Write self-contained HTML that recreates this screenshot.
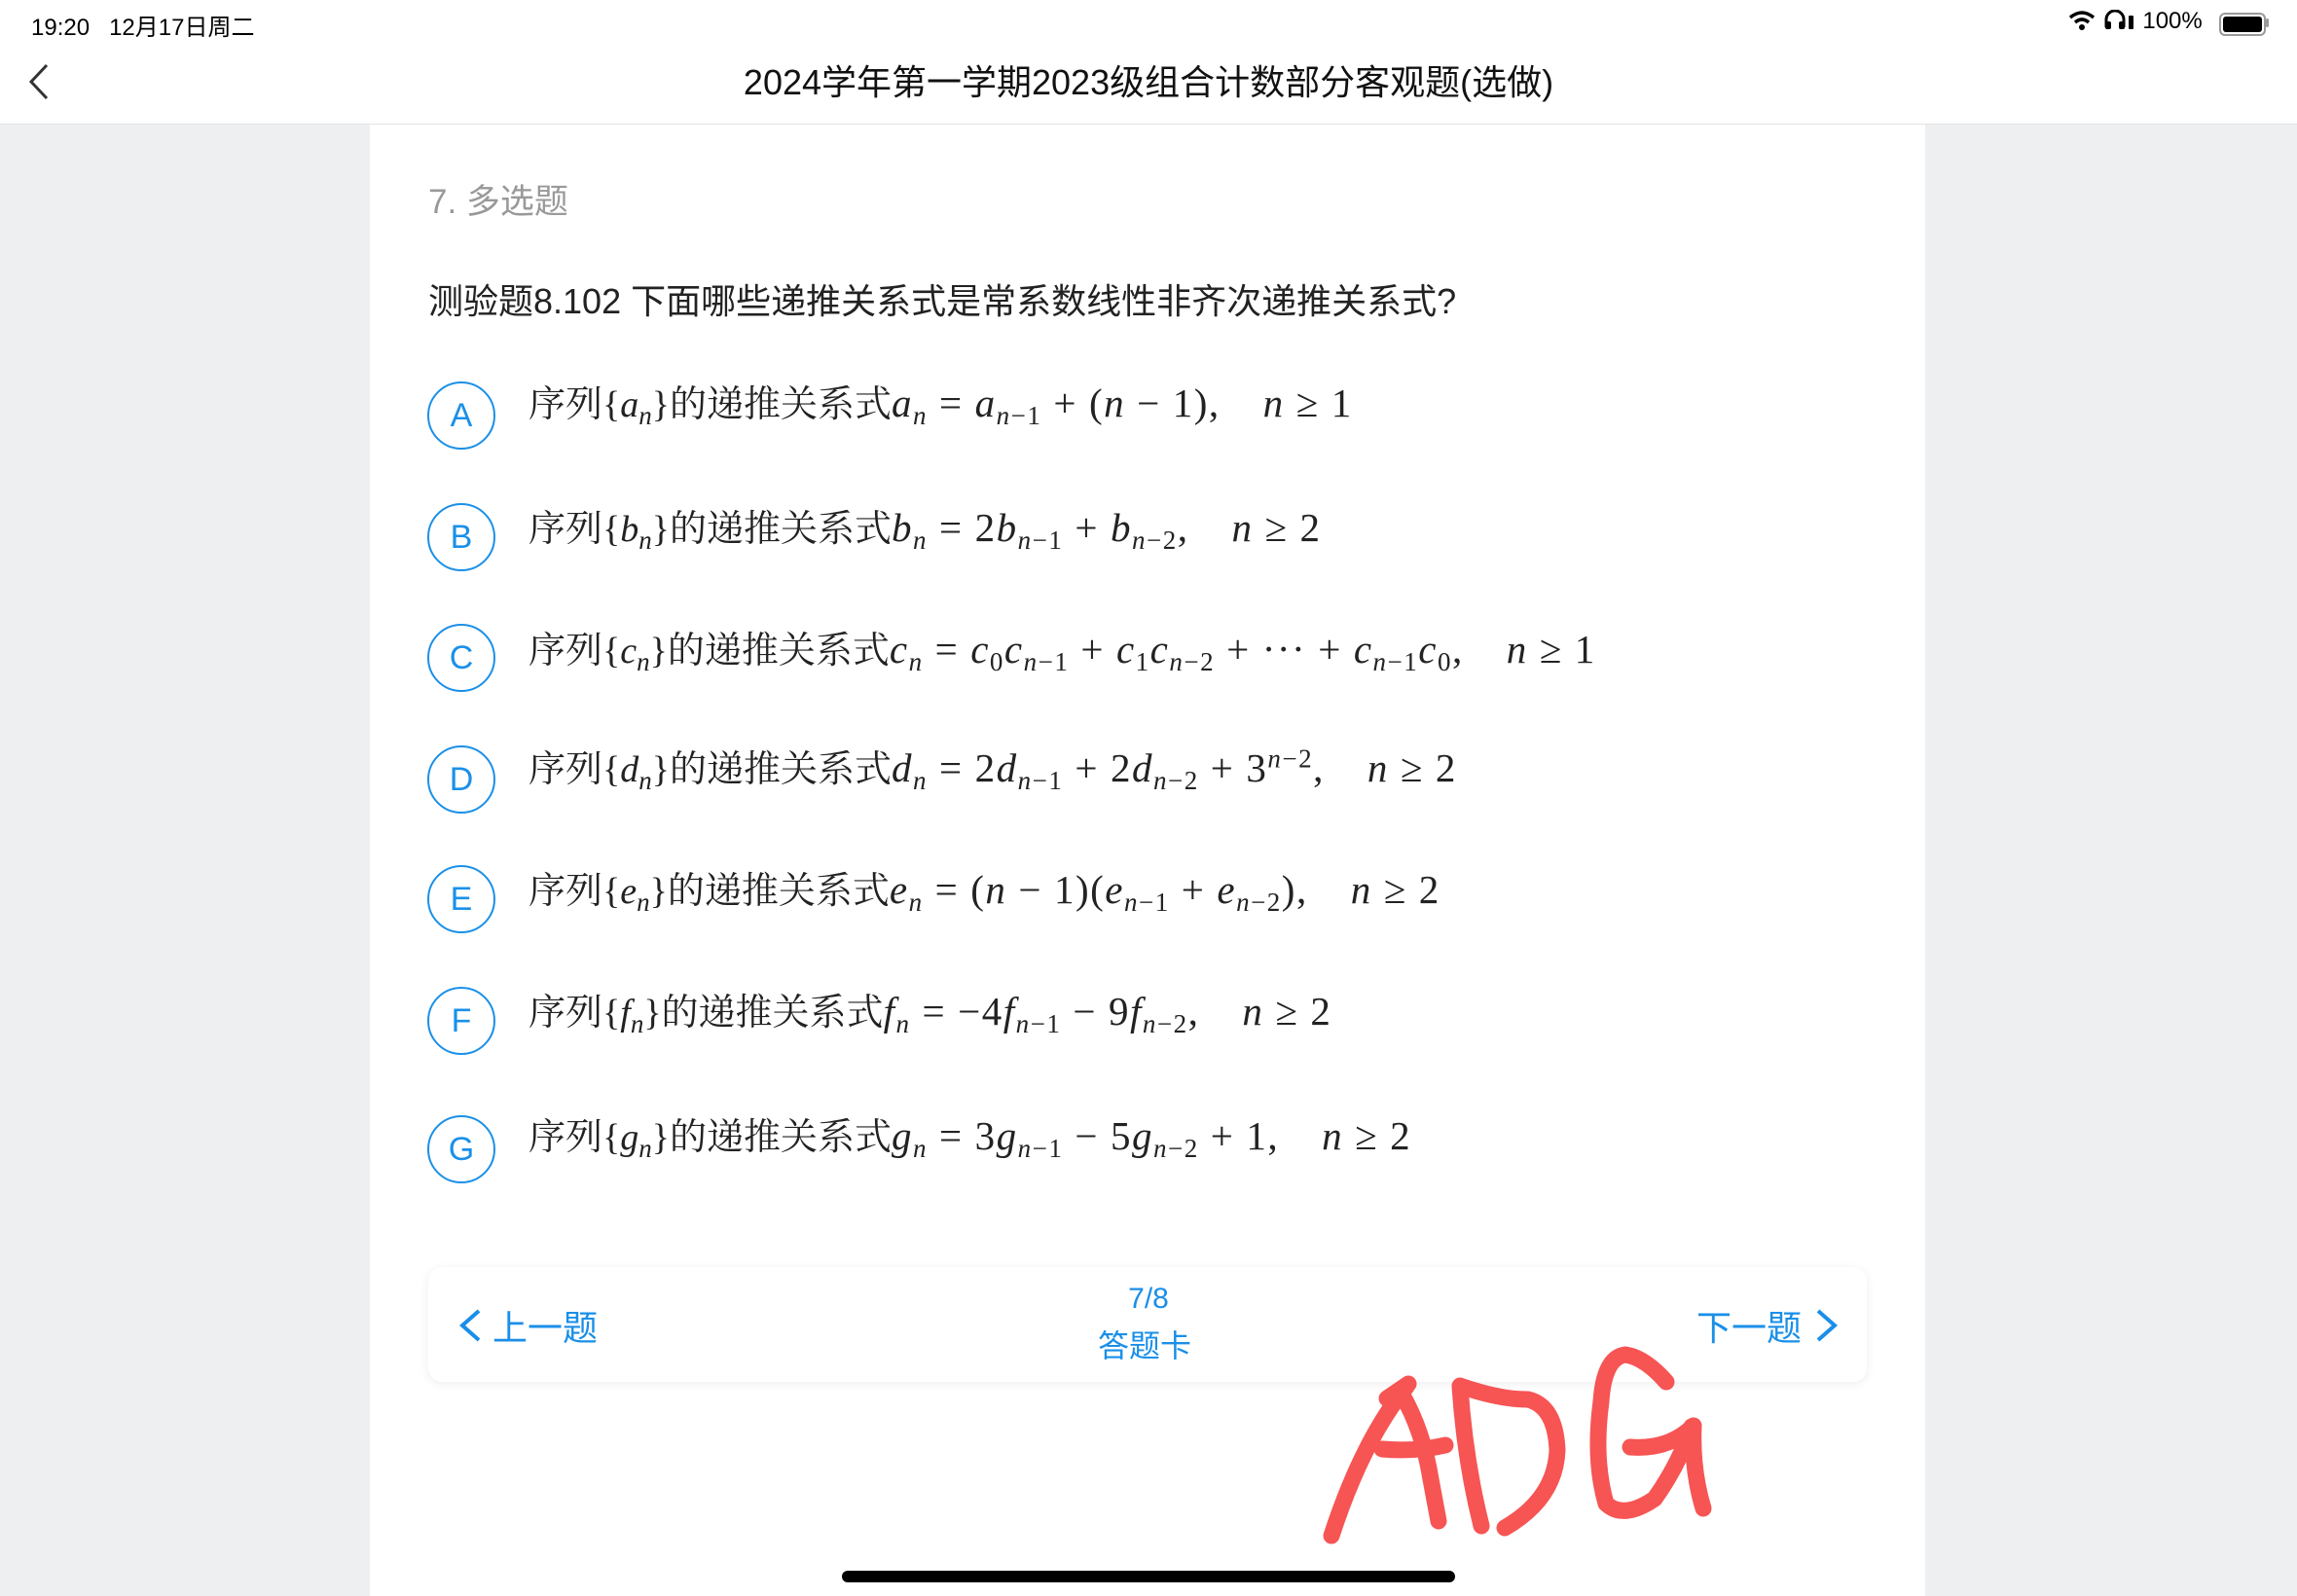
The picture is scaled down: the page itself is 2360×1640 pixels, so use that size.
<!DOCTYPE html>
<html><head><meta charset="utf-8"><style>
body{margin:0;width:2360px;height:1640px;position:relative;overflow:hidden;background:#eeeff1;font-family:"Liberation Sans","Noto Sans CJK SC",sans-serif;}
.hdr{position:absolute;left:0;top:0;width:2360px;height:127px;background:#fff;border-bottom:1px solid #e4e4e4;}
.st{position:absolute;top:8px;font-size:24px;color:#000;}
.title{position:absolute;top:56px;left:0;width:2360px;text-align:center;font-size:36px;color:#111;}
.panel{position:absolute;left:380px;top:128px;width:1598px;height:1512px;background:#fff;}
.abs{position:absolute;}
.circ{position:absolute;width:66px;height:66px;border:2.5px solid #1a90e8;border-radius:50%;color:#1a90e8;font-size:34px;text-align:center;line-height:66px;}
.opt{position:absolute;left:543px;font-family:"Liberation Serif","Noto Serif CJK SC",serif;font-size:38px;color:#222;white-space:nowrap;}
.opt i{font-style:italic}
.opt sub{font-size:27px;vertical-align:-8px}
.opt sub i{font-style:italic}
.m{font-size:41px;letter-spacing:1.5px}
.o{margin:0 12px}
.c{margin-right:44px}
</style></head><body>
<div class="hdr">
<div class="st" style="left:32px">19:20&nbsp;&nbsp;&nbsp;12月17日周二</div>
<div class="st" style="left:2124px;font-size:24px">
<svg width="30" height="22" viewBox="0 0 30 22" style="vertical-align:-3px"><path d="M3 8 Q15 -2 27 8" stroke="#000" stroke-width="3.5" fill="none"/><path d="M8 13 Q15 7 22 13" stroke="#000" stroke-width="3.5" fill="none"/><circle cx="15" cy="18" r="3" fill="#000"/></svg>
<svg width="34" height="22" viewBox="0 0 34 22" style="vertical-align:-3px"><path d="M3 18 V10 A9 9 0 0 1 21 10 V18" stroke="#000" stroke-width="3" fill="none"/><rect x="2" y="12" width="6" height="8" rx="2"/><rect x="16" y="12" width="6" height="8" rx="2"/><rect x="26" y="6" width="5" height="14" rx="1"/></svg> 100%</div>
<div class="abs" style="left:2280px;top:13px;width:44px;height:20px;border:2px solid #999;border-radius:6px;"><div style="margin:2px;width:40px;height:16px;background:#000;border-radius:3px"></div></div>
<div class="abs" style="left:2328px;top:19px;width:3px;height:9px;background:#999;border-radius:2px"></div>
<svg class="abs" style="left:28px;top:64px" width="24" height="40" viewBox="0 0 24 40"><path d="M20 3 L4 20 L20 37" stroke="#333" stroke-width="3" fill="none"/></svg>
<div class="title">2024学年第一学期2023级组合计数部分客观题(选做)</div>
</div>
<div class="panel"></div>
<div class="abs" style="left:440px;top:179px;font-size:35px;color:#999">7. 多选题</div>
<div class="abs" style="left:440px;top:281px;font-size:36px;color:#222">测验题8.102 下面哪些递推关系式是常系数线性非齐次递推关系式?</div>

<div class="circ" style="left:439px;top:392px">A</div>
<div class="opt" style="top:384px">序列{<i>a</i><sub><i>n</i></sub>}的递推关系式<span class="m"><i>a</i><sub><i>n</i></sub><span class="o">=</span><i>a</i><sub><i>n</i>−1</sub><span class="o">+</span>(<i>n</i><span class="o">−</span>1),<span class="c"></span><i>n</i><span class="o">≥</span>1</span></div>
<div class="circ" style="left:439px;top:517px">B</div>
<div class="opt" style="top:512px">序列{<i>b</i><sub><i>n</i></sub>}的递推关系式<span class="m"><i>b</i><sub><i>n</i></sub><span class="o">=</span>2<i>b</i><sub><i>n</i>−1</sub><span class="o">+</span><i>b</i><sub><i>n</i>−2</sub>,<span class="c"></span><i>n</i><span class="o">≥</span>2</span></div>
<div class="circ" style="left:439px;top:641px">C</div>
<div class="opt" style="top:637px">序列{<i>c</i><sub><i>n</i></sub>}的递推关系式<span class="m"><i>c</i><sub><i>n</i></sub><span class="o">=</span><i>c</i><sub>0</sub><i>c</i><sub><i>n</i>−1</sub><span class="o">+</span><i>c</i><sub>1</sub><i>c</i><sub><i>n</i>−2</sub><span class="o">+</span>···<span class="o">+</span><i>c</i><sub><i>n</i>−1</sub><i>c</i><sub>0</sub>,<span class="c"></span><i>n</i><span class="o">≥</span>1</span></div>
<div class="circ" style="left:439px;top:766px">D</div>
<div class="opt" style="top:759px">序列{<i>d</i><sub><i>n</i></sub>}的递推关系式<span class="m"><i>d</i><sub><i>n</i></sub><span class="o">=</span>2<i>d</i><sub><i>n</i>−1</sub><span class="o">+</span>2<i>d</i><sub><i>n</i>−2</sub><span class="o">+</span>3<sup style="font-size:27px"><i>n</i>−2</sup>,<span class="c"></span><i>n</i><span class="o">≥</span>2</span></div>
<div class="circ" style="left:439px;top:889px">E</div>
<div class="opt" style="top:884px">序列{<i>e</i><sub><i>n</i></sub>}的递推关系式<span class="m"><i>e</i><sub><i>n</i></sub><span class="o">=</span>(<i>n</i><span class="o">−</span>1)(<i>e</i><sub><i>n</i>−1</sub><span class="o">+</span><i>e</i><sub><i>n</i>−2</sub>),<span class="c"></span><i>n</i><span class="o">≥</span>2</span></div>
<div class="circ" style="left:439px;top:1014px">F</div>
<div class="opt" style="top:1009px">序列{<i>f</i><sub><i>n</i></sub>}的递推关系式<span class="m"><i>f</i><sub><i>n</i></sub><span class="o">=</span>−4<i>f</i><sub><i>n</i>−1</sub><span class="o">−</span>9<i>f</i><sub><i>n</i>−2</sub>,<span class="c"></span><i>n</i><span class="o">≥</span>2</span></div>
<div class="circ" style="left:439px;top:1146px">G</div>
<div class="opt" style="top:1137px">序列{<i>g</i><sub><i>n</i></sub>}的递推关系式<span class="m"><i>g</i><sub><i>n</i></sub><span class="o">=</span>3<i>g</i><sub><i>n</i>−1</sub><span class="o">−</span>5<i>g</i><sub><i>n</i>−2</sub><span class="o">+</span>1,<span class="c"></span><i>n</i><span class="o">≥</span>2</span></div>

<div class="abs" style="left:440px;top:1302px;width:1478px;height:118px;background:#fff;border-radius:14px;box-shadow:0 2px 10px rgba(0,0,0,0.07);"></div>
<svg class="abs" style="left:470px;top:1344px" width="26" height="36" viewBox="0 0 26 36"><path d="M22 3 L5 18 L22 33" stroke="#1a8fe8" stroke-width="4" fill="none"/></svg>
<div class="abs" style="color:#1a8fe8;left:506px;top:1336px;font-size:36px">上一题</div>
<div class="abs" style="color:#1a8fe8;left:1080px;top:1318px;width:200px;text-align:center;font-size:30px">7/8</div>
<div class="abs" style="color:#1a8fe8;left:1076px;top:1358px;width:200px;text-align:center;font-size:32px">答题卡</div>
<div class="abs" style="color:#1a8fe8;left:1743px;top:1336px;font-size:36px">下一题</div>
<svg class="abs" style="left:1864px;top:1344px" width="26" height="36" viewBox="0 0 26 36"><path d="M4 3 L21 18 L4 33" stroke="#1a8fe8" stroke-width="4" fill="none"/></svg>

<svg class="abs" style="left:0;top:0" width="2360" height="1640">
<g stroke="#f75454" stroke-width="17" fill="none" stroke-linecap="round" stroke-linejoin="round">
<path d="M1368 1578 Q1400 1480 1445 1425"/>
<path d="M1425 1437 L1447 1422"/>
<path d="M1440 1432 Q1462 1470 1470 1520 L1478 1563"/>
<path d="M1420 1489 Q1455 1492 1485 1485"/>
<path d="M1500 1425 Q1505 1500 1522 1568"/>
<path d="M1500 1424 Q1540 1438 1570 1438 Q1598 1445 1600 1490 Q1598 1540 1546 1570"/>
<path d="M1712 1420 Q1690 1395 1670 1392 Q1648 1395 1645 1440 Q1637 1500 1650 1545 Q1668 1562 1700 1540 Q1725 1505 1738 1466"/>
<path d="M1675 1487 Q1715 1490 1740 1465 Q1738 1510 1750 1550"/>
</g>
<rect x="865" y="1614" width="630" height="12" rx="6" fill="#000"/>
</svg>
</body></html>
